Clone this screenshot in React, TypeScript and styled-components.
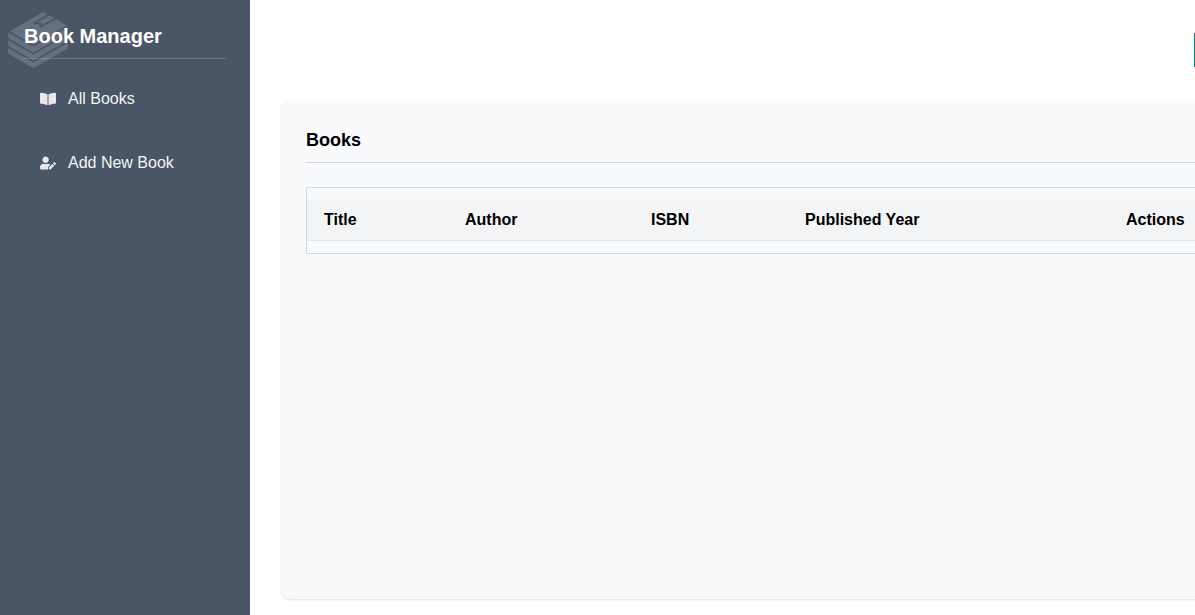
import React from "react";
import styled, { createGlobalStyle } from "styled-components";
import { SiBookstack } from "react-icons/si";
import { FaBookOpen, FaUserEdit } from "react-icons/fa";

const GlobalStyle = createGlobalStyle`
  *, *::before, *::after { box-sizing: border-box; }
  body {
    margin: 0;
    background: #fff;
    color: #000;
    font-family: "Liberation Sans", Arial, sans-serif;
    font-size: 16px;
    line-height: 24px;
  }
`;

const Shell = styled.div`
  display: flex;
  min-height: 100vh;
  overflow: hidden;
`;

const Sidebar = styled.aside`
  flex: 0 0 250px;
  padding: 12px 24px;
  background: #4a5565;
  color: #fff;
`;

const Brand = styled.div`
  position: relative;
  height: 47px;
  border-bottom: 1px solid #6a7282;
`;

const BrandMark = styled(SiBookstack)`
  position: absolute;
  top: -2px;
  left: -16px;
  width: 60px;
  height: 60px;
  color: #d1d5dc;
  opacity: 0.2;
`;

const BrandName = styled.h1`
  position: relative;
  margin: 0;
  padding-top: 10px;
  font-size: 20px;
  line-height: 28px;
  font-weight: 700;
`;

const Nav = styled.nav`
  display: flex;
  flex-direction: column;
  gap: 24px;
  padding-top: 20px;
`;

const NavLink = styled.a`
  display: flex;
  align-items: center;
  gap: 12px;
  padding: 8px 16px;
  color: #f3f4f6;
  text-decoration: none;

  svg {
    width: 16px;
    height: 16px;
    color: #e5e7eb;
  }
`;

const Main = styled.main`
  display: flex;
  flex: 1 0 1076px;
  flex-direction: column;
  padding: 32px 32px 16px;
`;

const Toolbar = styled.header`
  display: flex;
  justify-content: flex-end;
  padding-top: 1px;
  height: 69px;
`;

const AccountButton = styled.button`
  width: 100px;
  height: 34px;
  border: 1px solid #6a7282;
  border-left: 0;
  background: #00786f;
`;

const Card = styled.section`
  flex: 1;
  padding: 25px 24px 24px;
  border-radius: 8px;
  background: #f9fafc;
  box-shadow: 0 1px 3px rgba(0, 0, 0, 0.1), 0 1px 2px -1px rgba(0, 0, 0, 0.1);
`;

const CardTitle = styled.h2`
  margin: 0 0 24px;
  padding-bottom: 8px;
  border-bottom: 1px solid #d1d5dc;
  font-size: 18px;
  line-height: 28px;
  font-weight: 700;
`;

const TableFrame = styled.div`
  padding: 12px 0;
  border: 1px solid #d1d5dc;
`;

const Table = styled.table`
  width: 100%;
  table-layout: fixed;
  border-collapse: separate;
  border-spacing: 0;
`;

const HeadCell = styled.th<{ $width?: number }>`
  width: ${({ $width }) => ($width ? `${$width}px` : "auto")};
  padding: 8px 17px;
  border-bottom: 1px solid #e5e7eb;
  background: #f3f4f6;
  text-align: left;
  line-height: 24px;
  font-weight: 700;
`;

const links = [
  { label: "All Books", icon: FaBookOpen },
  { label: "Add New Book", icon: FaUserEdit },
];

const columns = [
  { label: "Title", width: 141 },
  { label: "Author", width: 186 },
  { label: "ISBN", width: 154 },
  { label: "Published Year", width: 321 },
  { label: "Actions" },
];

export default function App() {
  return (
    <>
      <GlobalStyle />
      <Shell>
        <Sidebar>
          <Brand>
            <BrandMark aria-hidden />
            <BrandName>Book Manager</BrandName>
          </Brand>
          <Nav>
            {links.map(({ label, icon: Icon }) => (
              <NavLink key={label} href="#">
                <Icon aria-hidden />
                {label}
              </NavLink>
            ))}
          </Nav>
        </Sidebar>
        <Main>
          <Toolbar>
            <AccountButton type="button" aria-label="Account" />
          </Toolbar>
          <Card>
            <CardTitle>Books</CardTitle>
            <TableFrame>
              <Table>
                <thead>
                  <tr>
                    {columns.map(({ label, width }) => (
                      <HeadCell key={label} $width={width} scope="col">
                        {label}
                      </HeadCell>
                    ))}
                  </tr>
                </thead>
              </Table>
            </TableFrame>
          </Card>
        </Main>
      </Shell>
    </>
  );
}
